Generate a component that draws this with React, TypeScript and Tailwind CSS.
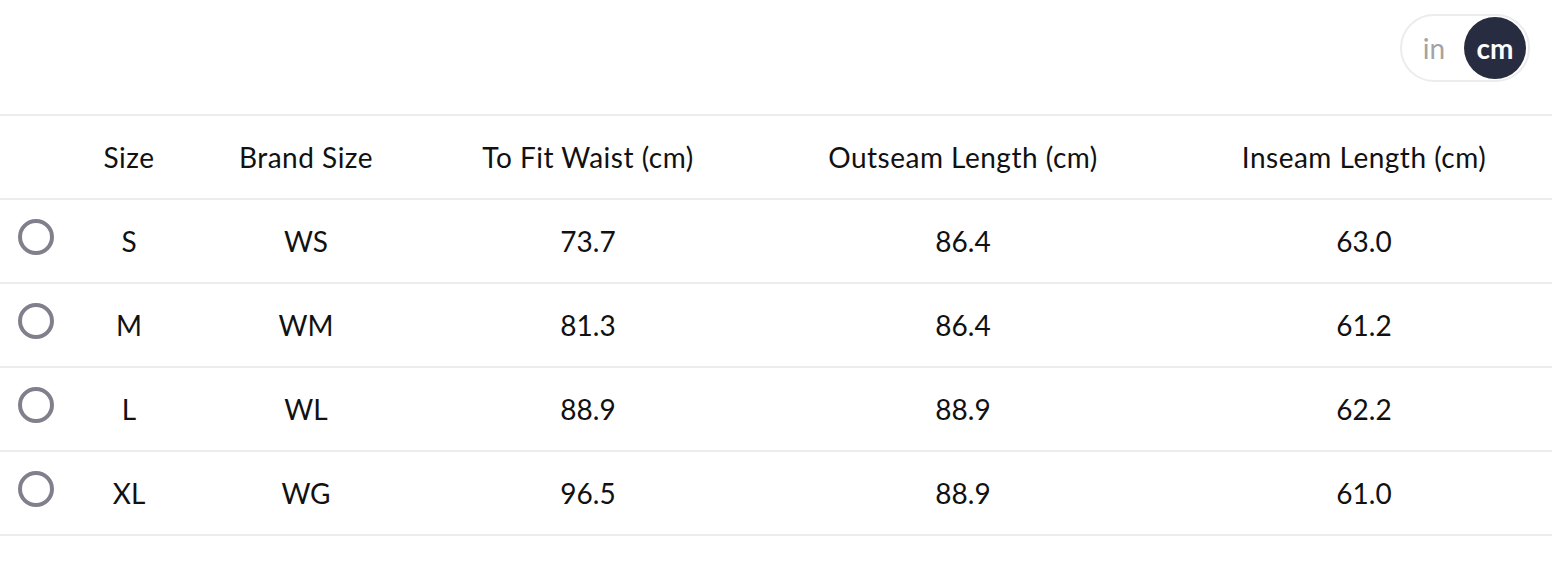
import React, { useState } from "react";

const rows = [
  { size: "S", brand: "WS", waist: "73.7", outseam: "86.4", inseam: "63.0" },
  { size: "M", brand: "WM", waist: "81.3", outseam: "86.4", inseam: "61.2" },
  { size: "L", brand: "WL", waist: "88.9", outseam: "88.9", inseam: "62.2" },
  { size: "XL", brand: "WG", waist: "96.5", outseam: "88.9", inseam: "61.0" },
];

export default function App() {
  const [unit, setUnit] = useState<"in" | "cm">("cm");
  const [selected, setSelected] = useState<number | null>(null);

  return (
    <div className="w-[1552px] h-[578px] bg-white text-[#111111] font-['Lato','Noto_Sans',sans-serif] overflow-hidden">
      <div className="flex justify-end pt-[14px] pr-[22px] pb-[32px]">
        <div className="flex items-center h-[68px] w-[130px] rounded-full border-2 border-[#ececec] p-[2px]">
          <button
            onClick={() => setUnit("in")}
            className={
              unit === "in"
                ? "flex-1 h-[62px] rounded-full bg-[#282c40] text-white text-[28px] font-bold"
                : "flex-1 h-[62px] text-[28px] text-[#a3a3a3]"
            }
          >
            in
          </button>
          <button
            onClick={() => setUnit("cm")}
            className={
              unit === "cm"
                ? "w-[62px] h-[62px] rounded-full bg-[#282c40] text-white text-[28px] font-bold leading-none"
                : "w-[62px] h-[62px] text-[28px] text-[#a3a3a3]"
            }
          >
            cm
          </button>
        </div>
      </div>

      <table className="w-full table-fixed border-collapse text-[28px]">
        <colgroup>
          <col className="w-[72px]" />
          <col className="w-[114px]" />
          <col className="w-[240px]" />
          <col className="w-[324px]" />
          <col className="w-[426px]" />
          <col />
        </colgroup>
        <thead>
          <tr className="h-[84px] border-t-2 border-b-2 border-[#ececec] tracking-[0.5px]">
            <th />
            <th className="font-normal text-center">Size</th>
            <th className="font-normal text-center">Brand Size</th>
            <th className="font-normal text-center">To Fit Waist ({unit})</th>
            <th className="font-normal text-center">Outseam Length ({unit})</th>
            <th className="font-normal text-center">Inseam Length ({unit})</th>
          </tr>
        </thead>
        <tbody>
          {rows.map((r, i) => (
            <tr
              key={r.size}
              onClick={() => setSelected(i)}
              className="h-[84px] border-b-2 border-[#ececec] cursor-pointer"
            >
              <td className="pl-[18px]">
                <span className="-mt-[8px] flex items-center justify-center w-[36px] h-[36px] rounded-full border-[4px] border-[#80808c]">
                  {selected === i && <span className="w-[16px] h-[16px] rounded-full bg-[#282c40]" />}
                </span>
              </td>
              <td className="text-center">{r.size}</td>
              <td className="text-center">{r.brand}</td>
              <td className="text-center">{r.waist}</td>
              <td className="text-center">{r.outseam}</td>
              <td className="text-center">{r.inseam}</td>
            </tr>
          ))}
        </tbody>
      </table>
    </div>
  );
}
